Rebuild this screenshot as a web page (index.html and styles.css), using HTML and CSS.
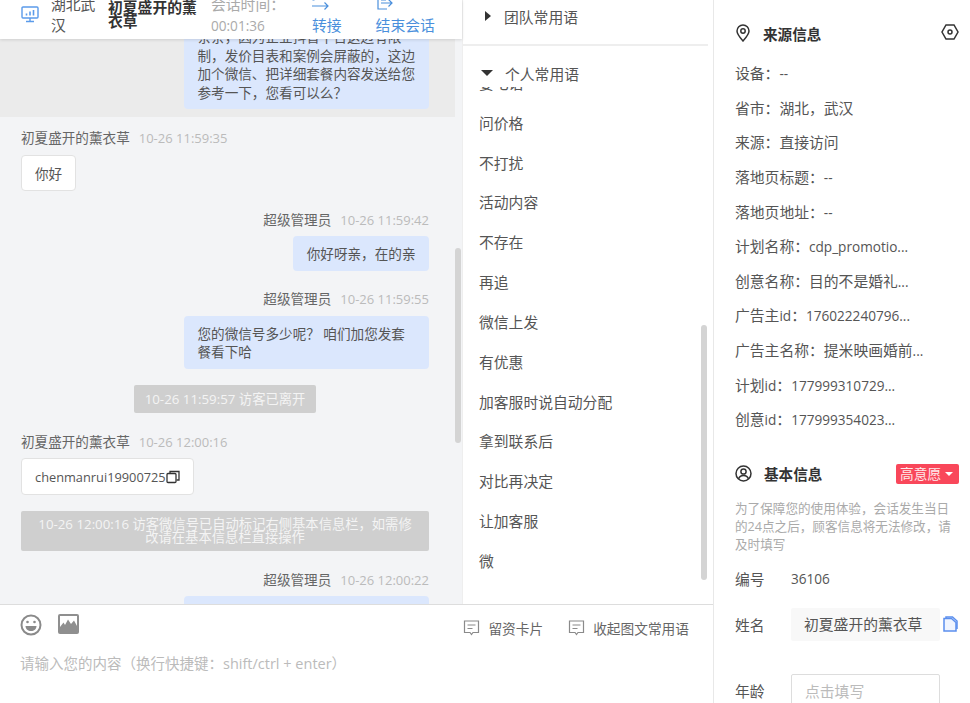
FILE: index.html
```html
<!DOCTYPE html>
<html lang="zh-CN">
<head>
  <meta charset="UTF-8" />
  <title>会话详情</title>
  <link rel="stylesheet" href="styles.css">
</head>
<body>
  <div class="app">
    <div class="main">
      <div class="main-top">
        <div class="chat">
          <div class="chat-header">
            <svg class="screen-icon" width="18" height="18" viewBox="0 0 18 18" fill="none" stroke="#5b9bea" stroke-width="1.4"><rect x="1" y="2" width="16" height="11" rx="1"/><path d="M9 13v3M5 16.500h8"/><path d="M5.500 10.500V8.500M9 10.500V6.500M12.500 10.500V5" stroke-width="1.600"/></svg>
            <div class="loc">湖北武汉</div>
            <div class="visitor">初夏盛开的薰衣草</div>
            <div class="duration">会话时间：<br><span class="latin">00:01:36</span></div>
            <div class="action action-transfer">
              <svg width="17" height="11" viewBox="0 0 17 11" fill="none" stroke="#4a8fdc" stroke-width="1.200"><path d="M0.500 1h2M0 7h16M12.500 3.500L16 7l-3.500 3.500"/></svg>
              <span>转接</span>
            </div>
            <div class="action action-end">
              <svg width="17" height="11" viewBox="0 0 17 11" fill="none" stroke="#4a8fdc" stroke-width="1.200"><path d="M2 -1v11h9M5 1h5M5 4h11M12.500 .5L16 4l-3.500 3.500"/></svg>
              <span>结束会话</span>
            </div>
          </div>
          <div class="chat-list">
            <div class="msg-highlight">
              <div class="bubble bubble-me bubble-wide">亲亲，因为企业抖音平台这边有限制，发价目表和案例会屏蔽的，这边加个微信、把详细套餐内容发送给您参考一下，您看可以么？</div>
            </div>

            <div class="msg msg-left msg-first">
              <div class="msg-meta"><span class="msg-name">初夏盛开的薰衣草</span><span class="msg-time">10-26 11:59:35</span></div>
              <div class="bubble bubble-visitor">你好</div>
            </div>

            <div class="msg msg-right">
              <div class="msg-meta"><span class="msg-name">超级管理员</span><span class="msg-time">10-26 11:59:42</span></div>
              <div class="bubble bubble-me">你好呀亲，在的亲</div>
            </div>

            <div class="msg msg-right">
              <div class="msg-meta"><span class="msg-name">超级管理员</span><span class="msg-time">10-26 11:59:55</span></div>
              <div class="bubble bubble-me bubble-wide">您的微信号多少呢？ 咱们加您发套餐看下哈</div>
            </div>

            <div class="sys-row">
              <div class="sys-msg">10-26 11:59:57 访客已离开</div>
            </div>

            <div class="msg msg-left">
              <div class="msg-meta"><span class="msg-name">初夏盛开的薰衣草</span><span class="msg-time">10-26 12:00:16</span></div>
              <div class="bubble bubble-visitor bubble-wechat">chenmanrui19900725<svg width="14" height="14" viewBox="0 0 14 14" fill="none" stroke="#333" stroke-width="1.300"><rect x="1" y="3.500" width="9" height="9" rx="1"/><path d="M4 3V1.500h9v8.500h-2.500"/></svg></div>
            </div>

            <div class="sys-row">
              <div class="sys-msg sys-msg-full">10-26 12:00:16 访客微信号已自动标记右侧基本信息栏，如需修改请在基本信息栏直接操作</div>
            </div>

            <div class="msg msg-right">
              <div class="msg-meta"><span class="msg-name">超级管理员</span><span class="msg-time">10-26 12:00:22</span></div>
              <div class="bubble bubble-me bubble-wide">好的亲，稍后我们的顾问会添加您的微信，请注意查看通过一下哦，祝您生活愉快</div>
            </div>
          </div>
          <div class="chat-scrollbar"></div>
        </div>

        <div class="phrases">
          <div class="phrase-team">
            <span class="caret-right"></span>团队常用语
          </div>
          <div class="phrase-own">
            <span class="caret-down"></span>个人常用语
          </div>
          <div class="phrase-list">
            <div class="phrase-item">要电话</div>
            <div class="phrase-item">问价格</div>
            <div class="phrase-item">不打扰</div>
            <div class="phrase-item">活动内容</div>
            <div class="phrase-item">不存在</div>
            <div class="phrase-item">再追</div>
            <div class="phrase-item">微信上发</div>
            <div class="phrase-item">有优惠</div>
            <div class="phrase-item">加客服时说自动分配</div>
            <div class="phrase-item">拿到联系后</div>
            <div class="phrase-item">对比再决定</div>
            <div class="phrase-item">让加客服</div>
            <div class="phrase-item">微</div>
          </div>
          <div class="phrase-scrollbar"></div>
        </div>
      </div>

      <div class="composer">
        <div class="composer-tools">
          <svg class="tool-smile" width="22" height="22" viewBox="0 0 22 22" fill="none" stroke="#8a8a8a" stroke-width="2"><circle cx="11" cy="11" r="9.500"/><circle cx="7.500" cy="8" r="1.300" fill="#8a8a8a" stroke="none"/><circle cx="14.500" cy="8" r="1.300" fill="#8a8a8a" stroke="none"/><path d="M5.500 12h11c0 3-2.500 5-5.500 5s-5.500-2-5.500-5z" fill="#8a8a8a" stroke="none"/></svg>
          <svg class="tool-image" width="21" height="20" viewBox="0 0 21 20"><path d="M2 0h17a2 2 0 0 1 2 2v16a2 2 0 0 1-2 2H2a2 2 0 0 1-2-2V2a2 2 0 0 1 2-2z" fill="#8f8f8f"/><path d="M2 2h17v10l-3-5.500-3 3.500-3-4.500L7 11 5.500 8.500 2 13z" fill="#fff"/></svg>
          <div class="tool-link tool-card">
            <svg width="17" height="16" viewBox="0 0 17 16" fill="none" stroke="#8a8a8a" stroke-width="1.200"><path d="M1.500 1h14v11.500H10L8.500 14.500 7 12.500H1.500z"/><path d="M4.500 5h8M4.500 8.500h5"/></svg>
            留资卡片
          </div>
          <div class="tool-link">
            <svg width="17" height="16" viewBox="0 0 17 16" fill="none" stroke="#8a8a8a" stroke-width="1.200"><path d="M1.500 1h14v11.500H10L8.500 14.500 7 12.500H1.500z"/><path d="M4.500 5h8M4.500 8.500h5"/></svg>
            收起图文常用语
          </div>
        </div>
        <div class="composer-input">请输入您的内容（换行快捷键：shift/ctrl + enter）</div>
      </div>
    </div>

    <div class="side">
      <div class="side-title side-title-source">
        <svg width="16" height="18" viewBox="0 0 16 18" fill="none" stroke="#333" stroke-width="1.500"><path d="M8 17C4 12.500 2 10 2 7a6 6 0 0 1 12 0c0 3-2 5.500-6 10z"/><circle cx="8" cy="7" r="2.200"/></svg>
        <span>来源信息</span>
        <svg class="side-title-end" width="18" height="16" viewBox="0 0 18 16" fill="none" stroke="#333" stroke-width="1.500"><path d="M5 1h8l4 7-4 7H5L1 8z"/><circle cx="9" cy="8" r="2"/></svg>
      </div>
      <div class="source-row">设备：<span class="latin">--</span></div>
      <div class="source-row">省市：湖北，武汉</div>
      <div class="source-row">来源：直接访问</div>
      <div class="source-row">落地页标题：<span class="latin">--</span></div>
      <div class="source-row">落地页地址：<span class="latin">--</span></div>
      <div class="source-row">计划名称：<span class="latin">cdp_promotio...</span></div>
      <div class="source-row">创意名称：目的不是婚礼<span class="latin">...</span></div>
      <div class="source-row">广告主<span class="latin">id</span>：<span class="latin">176022240796...</span></div>
      <div class="source-row">广告主名称：提米映画婚前<span class="latin">...</span></div>
      <div class="source-row">计划<span class="latin">id</span>：<span class="latin">177999310729...</span></div>
      <div class="source-row">创意<span class="latin">id</span>：<span class="latin">177999354023...</span></div>

      <div class="side-title side-title-base">
        <svg width="17" height="17" viewBox="0 0 17 17" fill="none" stroke="#333" stroke-width="1.500"><circle cx="8.500" cy="8.500" r="7.500"/><circle cx="8.500" cy="6.500" r="2.600"/><path d="M3.500 14c.8-2.500 2.800-3.500 5-3.500s4.200 1 5 3.500"/></svg>
        <span>基本信息</span>
        <div class="intent-tag">高意愿<span class="tag-caret"></span></div>
      </div>
      <p class="side-note">为了保障您的使用体验，会话发生当日的24点之后，顾客信息将无法修改，请及时填写</p>
      <div class="form-row form-row-id">
        <label>编号</label><span class="latin">36106</span>
      </div>
      <div class="form-row form-row-name">
        <label>姓名</label>
        <div class="field field-filled">初夏盛开的薰衣草</div>
        <svg class="copy-icon" width="15" height="16" viewBox="0 0 15 16" fill="none" stroke="#5b8fee" stroke-width="1.500"><path d="M3 2.500V1h6.500l4.500 4v8"/><path d="M1 15V2.500h7.500L13 6.500V15z" fill="#f0f5ff"/></svg>
      </div>
      <div class="form-row form-row-age">
        <label>年龄</label>
        <div class="field field-empty">点击填写</div>
      </div>
    </div>
  </div>
</body>
</html>
```

FILE: styles.css
```css
* {
  box-sizing: border-box;
}
body {
  margin: 0;
  background: #fff;
  color: #555;
  font-family: "Open Sans", "Noto Sans CJK SC", sans-serif;
  font-size: 14.800px;
  overflow: hidden;
}
.latin {
  font-size: 13.600px;
}
.app {
  display: flex;
  width: 970px;
  height: 703px;
  overflow: hidden;
}
.main {
  width: 713px;
  display: flex;
  flex-direction: column;
}
.main-top {
  display: flex;
  height: 604px;
}

/* chat */
.chat {
  position: relative;
  width: 462px;
  display: flex;
  flex-direction: column;
  background: #f3f4f6;
}
.chat-header {
  position: relative;
  z-index: 2;
  flex: none;
  display: flex;
  align-items: flex-end;
  height: 39px;
  overflow: hidden;
  background: #fff;
  box-shadow: 0 1px 3px rgba(0,0,0,0.12);
}
.screen-icon {
  flex: none;
  margin: 0 0 16px 21px;
}
.loc {
  flex: none;
  width: 46px;
  margin-left: 12px;
  line-height: 21px;
  margin-bottom: 3px;
}
.visitor {
  flex: none;
  width: 90px;
  margin-left: 11px;
  margin-bottom: 11px;
  font-weight: bold;
  color: #333;
  line-height: 13.500px;
}
.duration {
  flex: none;
  margin-left: 13px;
  width: 80px;
  line-height: 21px;
  margin-bottom: 3px;
  color: #aaa;
}
.action {
  flex: none;
  display: flex;
  flex-direction: column;
  color: #4a8fdc;
  margin-bottom: 3px;
}
.action svg {
  display: block;
  margin-bottom: 5px;
}
.action span {
  line-height: 21px;
}
.action-transfer {
  margin-left: 21px;
}
.action-end {
  margin-left: 34px;
}
.chat-list {
  flex: 1;
  min-height: 0;
  width: 455px;
  overflow: hidden;
}
.msg-highlight {
  display: flex;
  justify-content: flex-end;
  margin-top: -19.600px;
  padding: 0 26px 8px 21px;
  background: #ebebeb;
}
.msg {
  display: flex;
  flex-direction: column;
  padding: 0 26px 0 21px;
  margin-top: 18.700px;
}
.msg-first {
  margin-top: 11px;
}
.msg-right {
  align-items: flex-end;
}
.msg-left {
  align-items: flex-start;
}
.msg-meta {
  display: flex;
  height: 20px;
  line-height: 20px;
  margin-bottom: 6.500px;
  font-size: 13.600px;
}
.msg-name {
  color: #666;
}
.msg-time {
  margin-left: 9px;
  font-size: 13px;
  color: #bbb;
}
.bubble {
  padding: 9px 13.500px 7px;
  font-size: 13.600px;
  line-height: 18.400px;
  border-radius: 4px;
  color: #555;
}
.bubble-me {
  background: #dbe7fd;
}
.bubble-wide {
  width: 245px;
}
.bubble-visitor {
  padding: 9px 13px 7px;
  background: #fff;
  border: 1px solid #e2e2e2;
}
.bubble-wechat {
  display: flex;
  align-items: center;
  font-size: 12.800px;
}
.sys-row {
  display: flex;
  justify-content: center;
  padding: 0 26px 0 21px;
  margin-top: 16.500px;
}
.sys-msg {
  padding: 0 11px;
  background: #cfcfcf;
  color: #f4f4f4;
  font-size: 13.300px;
  line-height: 28px;
  border-radius: 2px;
  text-align: center;
}
.sys-msg-full {
  width: 100%;
  padding: 7px 13px;
  line-height: 13px;
}
.chat-scrollbar {
  position: absolute;
  top: 248px;
  left: 455px;
  width: 6px;
  height: 195px;
  background: #d4d4d4;
  border-radius: 3px;
}

/* phrases */
.phrases {
  position: relative;
  width: 251px;
  background: #fff;
  border-left: 1px solid #eee;
  display: flex;
  flex-direction: column;
  overflow: hidden;
}
.phrase-team {
  flex: none;
  display: flex;
  align-items: center;
  height: 46px;
  width: 245px;
  padding: 0 0 12px 22px;
  border-bottom: 2px solid #eee;
}
.phrase-own {
  flex: none;
  display: flex;
  align-items: center;
  height: 41px;
  padding: 13px 0 0 18px;
}
.caret-right {
  width: 0;
  height: 0;
  margin-right: 13px;
  border-left: 6px solid #333;
  border-top: 5px solid transparent;
  border-bottom: 5px solid transparent;
}
.caret-down {
  width: 0;
  height: 0;
  margin-right: 12px;
  border-top: 6px solid #333;
  border-left: 6px solid transparent;
  border-right: 6px solid transparent;
}
.phrase-list {
  flex: 1;
  min-height: 0;
  overflow: hidden;
  padding-left: 16px;
}
.phrase-item {
  height: 39.830px;
  line-height: 39.830px;
}
.phrase-item:first-child {
  margin-top: -23px;
}
.phrase-scrollbar {
  position: absolute;
  top: 325px;
  left: 238px;
  width: 6px;
  height: 255px;
  background: #d4d4d4;
  border-radius: 3px;
}

/* composer */
.composer {
  height: 99px;
  border-top: 1px solid #ddd;
  padding: 9px 24px 0 20px;
}
.composer-tools {
  display: flex;
  align-items: flex-start;
}
.tool-image {
  margin-left: 16px;
}
.tool-link {
  display: flex;
  align-items: center;
  gap: 8px;
  margin-top: 4px;
  color: #666;
  font-size: 13.700px;
}
.tool-card {
  margin-left: auto;
  margin-right: 25px;
}
.composer-input {
  margin-top: 14px;
  font-size: 14.500px;
  color: #bbb;
}

/* right side */
.side {
  flex: 1;
  border-left: 1px solid #e8e8e8;
  padding-left: 21px;
  padding-right: 11px;
}
.side-title {
  display: flex;
  align-items: center;
  font-weight: bold;
  font-size: 14.600px;
  color: #333;
}
.side-title span {
  margin-left: 12px;
}
.side-title-source {
  height: 20px;
  margin-top: 23px;
  margin-bottom: 13px;
}
.side-title-end {
  margin-left: auto;
  margin-top: -3px;
}
.source-row {
  height: 34.650px;
  line-height: 34.650px;
  white-space: nowrap;
}
.side-title-base {
  height: 20px;
  margin-top: 26.500px;
}
.intent-tag {
  margin-left: auto;
  width: 63px;
  height: 20px;
  line-height: 20px;
  padding-left: 4px;
  background: #f9475a;
  color: #ffe9eb;
  font-size: 13.700px;
  font-weight: normal;
  border-radius: 2px;
  display: flex;
  align-items: center;
}
.tag-caret {
  width: 0;
  height: 0;
  margin-left: 4px !important;
  border-top: 4px solid #fff;
  border-left: 4px solid transparent;
  border-right: 4px solid transparent;
}
.side-note {
  margin: 16px 0 0;
  font-size: 12.600px;
  line-height: 18px;
  color: #aaa;
}
.form-row {
  display: flex;
  align-items: center;
}
.form-row label {
  width: 56px;
  flex: none;
}
.form-row-id {
  margin-top: 15px;
  height: 20px;
}
.form-row-name {
  margin-top: 19px;
}
.form-row-age {
  margin-top: 33px;
}
.field {
  width: 149px;
  height: 33px;
  line-height: 33px;
  padding-left: 13px;
  border-radius: 2px;
  flex: none;
}
.field-filled {
  background: #f8f8f8;
}
.field-empty {
  border: 1px solid #ddd;
  color: #bbb;
}
.copy-icon {
  flex: none;
  margin-left: 3px;
}
```
